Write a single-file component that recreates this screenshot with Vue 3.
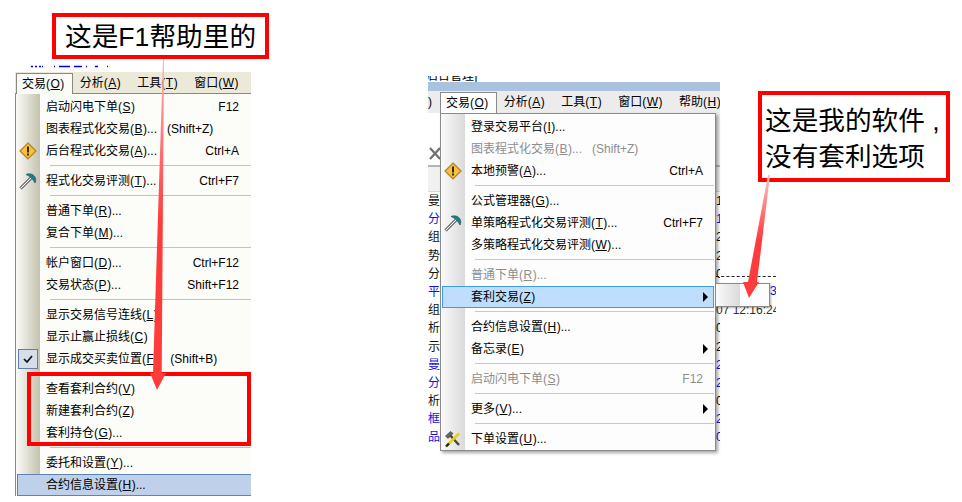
<script setup>
const sep = { sep: true }
const leftTabs = [
  { t: '交易', k: 'O', active: true },
  { t: '分析', k: 'A' },
  { t: '工具', k: 'T' },
  { t: '窗口', k: 'W' }
]
const rightTabs = [...leftTabs, { t: '帮助', k: 'H' }]

const leftItems = [
  { t: '启动闪电下单', k: 'S', sc: 'F12' },
  { t: '图表程式化交易', k: 'B', after: '...', note: '(Shift+Z)' },
  { t: '后台程式化交易', k: 'A', after: '...', sc: 'Ctrl+A', icon: 'warn' },
  sep,
  { t: '程式化交易评测', k: 'T', after: '...', sc: 'Ctrl+F7', icon: 'pick' },
  sep,
  { t: '普通下单', k: 'R', after: '...' },
  { t: '复合下单', k: 'M', after: '...' },
  sep,
  { t: '帐户窗口', k: 'D', after: '...', sc: 'Ctrl+F12' },
  { t: '交易状态', k: 'P', after: '...', sc: 'Shift+F12' },
  sep,
  { t: '显示交易信号连线', k: 'L' },
  { t: '显示止赢止损线', k: 'C' },
  { t: '显示成交买卖位置', k: 'F', note: '(Shift+B)', wide: true, icon: 'check' },
  sep,
  { t: '查看套利合约', k: 'V' },
  { t: '新建套利合约', k: 'Z' },
  { t: '套利持仓', k: 'G', after: '...' },
  sep,
  { t: '委托和设置', k: 'Y', after: '...' },
  { t: '合约信息设置', k: 'H', after: '...', hot: true }
]

const rightItems = [
  { t: '登录交易平台', k: 'I', after: '...' },
  { t: '图表程式化交易', k: 'B', after: '...', note: '(Shift+Z)', off: true },
  { t: '本地预警', k: 'A', after: '...', sc: 'Ctrl+A', icon: 'warn' },
  sep,
  { t: '公式管理器', k: 'G', after: '...' },
  { t: '单策略程式化交易评测', k: 'T', after: '...', sc: 'Ctrl+F7', icon: 'pick' },
  { t: '多策略程式化交易评测', k: 'W', after: '...' },
  sep,
  { t: '普通下单', k: 'R', after: '...', off: true },
  { t: '套利交易', k: 'Z', hot: true, sub: true },
  sep,
  { t: '合约信息设置', k: 'H', after: '...' },
  { t: '备忘录', k: 'E', sub: true },
  sep,
  { t: '启动闪电下单', k: 'S', sc: 'F12', off: true },
  sep,
  { t: '更多', k: 'V', after: '...', sub: true },
  sep,
  { t: '下单设置', k: 'U', after: '...', icon: 'tools' }
]

const panels = [
  { id: 'xp', tabs: leftTabs, items: leftItems },
  { id: 'win7', tabs: rightTabs, items: rightItems }
]

const backRows = [
  ['曼', '1', ''], ['分', '1', 'blue'], ['组', '2', ''], ['势', '2', ''], ['分', '0', ''],
  ['平', '', 'blue'], ['组', '', ''], ['析', '0', ''], ['示', '2', ''], ['曼', '2', 'blue'],
  ['分', '2', 'blue'], ['析', '0', ''], ['框', '2', 'blue'], ['品', '0', 'blue']
]
</script>

<template>
  <div class="canvas">
    <svg class="scraps" width="90" height="3" viewBox="0 0 90 3">
      <path d="M1 1.5h2M5 1.5h2M9 1.5h2M12 1.5h1M24 1.5h1M29 1.5h11M44 1.5h8M56 1.5h1M65 1.5h3M77 1.5h1" stroke="#0000ff" stroke-width="1.5" fill="none" />
    </svg>

    <div v-for="p in panels" :key="p.id" class="window" :class="p.id">
      <template v-if="p.id === 'win7'">
        <div class="title-scrap"><span>后台管理]</span></div>
        <div class="caption"></div>
        <div class="back">
          <div class="back-col">
            <div class="tool-strip">
              <svg class="close-x" width="12" height="13" viewBox="0 0 12 13">
                <path d="M1 1l10 11M11 1 1 12" stroke="#707070" stroke-width="2.2" fill="none" />
              </svg>
            </div>
            <div class="head-strip"></div>
            <div v-for="(r, i) in backRows" :key="i" class="back-row" :class="r[2]">{{ r[0] }}</div>
          </div>
          <div class="back-col right-col">
            <div class="tool-strip"></div>
            <div class="head-strip"></div>
            <div v-for="(r, i) in backRows" :key="i" class="back-row" :class="r[2]">{{ r[1] }}</div>
            <div class="dash"></div>
            <div class="stray blue-three">3</div>
            <div class="stray stamp">07 12:16:24</div>
          </div>
        </div>
      </template>

      <div class="menubar">
        <span v-if="p.id === 'win7'" class="cut-tab">)</span>
        <span v-for="tab in p.tabs" :key="tab.k" class="tab" :class="{ active: tab.active }">{{ tab.t }}(<u>{{ tab.k }}</u>)</span>
      </div>

      <div class="menu">
        <template v-for="(it, i) in p.items" :key="i">
          <div v-if="it.sep" class="sep"></div>
          <div v-else class="row" :class="{ hot: it.hot, off: it.off }">
            <span class="slot">
              <svg v-if="it.icon === 'warn'" width="18" height="18" viewBox="0 0 18 18">
                <polygon points="9,1 17,9 9,17 1,9" fill="#f7c13d" stroke="#b57f22" stroke-width="1.2" />
                <rect x="8" y="4.5" width="2" height="6" fill="#3a2a10" />
                <rect x="8" y="11.5" width="2" height="2" fill="#3a2a10" />
              </svg>
              <svg v-else-if="it.icon === 'pick'" width="18" height="18" viewBox="0 0 18 18">
                <path d="M1.5 16.5 12 6" stroke="#222" stroke-width="2.8" fill="none" />
                <path d="M1.5 16.5 12 6" stroke="#fff" stroke-width="1.2" fill="none" />
                <path d="M7 2.5C10 1 14 1.8 16 5C17 7 17 9.5 16 11C14.5 8 11.5 4.2 7 2.5Z" fill="#1c8089" stroke="#0e4d55" stroke-width=".6" />
              </svg>
              <span v-else-if="it.icon === 'check'" class="checkbox">
                <svg width="10" height="8" viewBox="0 0 10 8">
                  <path d="M1 4l3 3 5-6" stroke="#111" stroke-width="1.7" fill="none" />
                </svg>
              </span>
              <svg v-else-if="it.icon === 'tools'" width="18" height="18" viewBox="0 0 18 18">
                <path d="M5 4 15 15" stroke="#444" stroke-width="2.4" fill="none" />
                <path d="M1.5 6 6.5 1.5 9 3.5 4 8.5Z" fill="#666" stroke="#333" stroke-width=".6" />
                <path d="M3 15.5 15 3.5" stroke="#e8d20e" stroke-width="2.6" fill="none" />
                <path d="M2 16.5 5 13.5" stroke="#222" stroke-width="2.4" fill="none" />
              </svg>
            </span>
            <span class="label">{{ it.t }}(<u>{{ it.k }}</u>){{ it.after }}</span>
            <span v-if="it.note" class="note" :class="{ wide: it.wide }">{{ it.note }}</span>
            <span v-if="it.sc" class="shortcut">{{ it.sc }}</span>
            <span v-if="it.sub" class="caret"></span>
          </div>
        </template>
      </div>

      <div v-if="p.id === 'win7'" class="submenu"></div>
    </div>

    <div class="callout one">这是F1帮助里的</div>
    <div class="callout two">这是我的软件 ,<br />没有套利选项</div>
    <div class="frame"></div>

    <svg class="arrows" width="962" height="502" viewBox="0 0 962 502">
      <defs>
        <linearGradient id="fadeA" x1="0" y1="59" x2="0" y2="220" gradientUnits="userSpaceOnUse">
          <stop offset="0" stop-color="#ffb4b4" />
          <stop offset="1" stop-color="#ff3c3c" />
        </linearGradient>
        <linearGradient id="fadeB" x1="0" y1="175" x2="0" y2="240" gradientUnits="userSpaceOnUse">
          <stop offset="0" stop-color="#ffc0c0" />
          <stop offset="1" stop-color="#ff3c3c" />
        </linearGradient>
      </defs>
      <polygon points="163,59 164,59 161.7,373 166,373 157,390 150,373 153,373" fill="url(#fadeA)" />
      <polygon points="768,175 770,175 757,282 759,282 749,298 743,282 748,282" fill="url(#fadeB)" />
    </svg>
  </div>
</template>

<style>
html, body { margin: 0; background: #fff; }
</style>

<style scoped>
.canvas {
  position: relative;
  width: 962px;
  height: 502px;
  overflow: hidden;
  background: #fff;
  color: #000;
  font: 12px/22px "Liberation Sans", "Noto Sans CJK SC", sans-serif;
}
.scraps { position: absolute; left: 30px; top: 65px; }

.window { position: absolute; overflow: hidden; }
.window.xp { left: 15px; top: 72px; width: 236px; height: 425px; }
.window.win7 { left: 428px; top: 76px; width: 348px; height: 380px; }

.menubar { display: flex; height: 22px; line-height: 22px; white-space: nowrap; position: relative; }
.xp .menubar { background: #ece9d8; padding-left: 1px; }
.win7 .menubar { background: #ececec; width: 292px; height: 22px; padding-left: 12px; box-sizing: border-box; overflow: hidden; }
.cut-tab { position: absolute; left: 0; top: 0; }
.tab { padding: 0 9.5px 0 7px; flex: none; box-sizing: border-box; }
.tab u { margin: 0 .5px; }
.tab.active { border: 1px solid #8c8a7c; border-bottom: 0; padding: 0 7.5px 0 5px; line-height: 21px; margin-top: 1px; position: relative; z-index: 3; }
.xp .tab.active { background: #fbfbf7; }
.win7 .tab.active { background: #fff; border-color: #8a8a8a; }

.menu { position: relative; box-sizing: border-box; padding-top: 2px; }
.xp .menu {
  height: 403px;
  border-left: 1px solid #8c8a7c;
  border-top: 1px solid #8c8a7c;
  margin-top: -1px;
  background: linear-gradient(90deg, #fbfbf7, #c4c2ae) no-repeat 0 0 / 24px 100%, #fcfcf9;
}
.win7 .menu {
  position: absolute;
  left: 12px;
  top: 37px;
  width: 276px;
  height: 338px;
  border: 1px solid #8a8a8a;
  background: linear-gradient(90deg, #fafafa, #dadada) no-repeat 0 0 / 24px 100%, #fdfdfd;
  box-shadow: 2px 2px 3px rgba(0, 0, 0, .35);
  z-index: 2;
}

.row {
  display: flex;
  align-items: center;
  box-sizing: border-box;
  height: 22px;
  margin: 0 0 0 1px;
  padding-right: 12px;
  border: 1px solid transparent;
  border-right: 0;
  white-space: nowrap;
}
.win7 .row { margin-right: 1px; padding-right: 10px; border-right: 1px solid transparent; }
.row.hot { border-color: #5f84b4; background: #bfd1ea; }
.win7 .row.hot { border-color: #3d9be9; background: #bfdefe; }
.row.off { color: #8d8d8d; }
.slot { flex: none; box-sizing: border-box; width: 22px; height: 20px; padding-right: 2px; display: flex; align-items: center; justify-content: center; }
.label { padding-left: 6px; }
.label u { margin: 0 .5px; }
.note { margin-left: 10px; }
.note.wide { margin-left: 12px; }
.shortcut { margin-left: auto; }
.caret {
  margin-left: auto;
  margin-right: -5px;
  width: 0;
  height: 0;
  border-left: 5px solid #000;
  border-top: 5px solid transparent;
  border-bottom: 5px solid transparent;
}
.checkbox {
  box-sizing: border-box;
  flex: none;
  width: 20px;
  height: 20px;
  display: flex;
  align-items: center;
  justify-content: center;
  border: 1px solid #5f7fa8;
  background: #d6deec;
}

.sep { height: 1px; margin: 3px 0 4px 34px; background: #c5c2b8; }
.win7 .sep { margin-right: 1px; background: #c8c8c8; }

.title-scrap { height: 6px; width: 292px; overflow: hidden; position: relative; }
.title-scrap span { position: absolute; left: -2px; bottom: -1px; line-height: 14px; font-size: 12px; }
.caption { height: 9px; width: 292px; background: #a9c3df; }

.back { position: absolute; left: 0; top: 37px; width: 348px; height: 343px; }
.back-col { position: absolute; left: 0; top: 0; width: 12px; overflow: hidden; }
.right-col { left: 288px; width: 60px; height: 343px; }
.tool-strip { height: 54px; background: #fff; position: relative; border-bottom: 2px solid #b4b4b4; box-sizing: border-box; }
.right-col .tool-strip { width: 4px; background: #eee; }
.close-x { position: absolute; left: 1px; top: 34px; }
.head-strip { height: 25px; background: #f1f1f1; border-bottom: 1px solid #d8d8d8; box-sizing: border-box; }
.right-col .head-strip { width: 4px; }
.back-row { height: 18.2px; line-height: 18px; color: #111; }
.right-col .back-row { width: 4px; overflow: hidden; }
.back-row.blue { color: #1212e0; }
.dash { position: absolute; left: 0; top: 163px; width: 60px; border-top: 1px dashed #222; }
.stray { position: absolute; line-height: 14px; white-space: nowrap; }
.blue-three { left: 54px; top: 171px; color: #1212e0; }
.stamp { left: 0; top: 190px; color: #333; }
.submenu {
  position: absolute;
  left: 287px;
  top: 207px;
  width: 55px;
  height: 24px;
  box-sizing: border-box;
  border: 1px solid #8a8a8a;
  background: linear-gradient(90deg, #fafafa, #dadada) no-repeat 0 0 / 24px 100%, #fdfdfd;
  box-shadow: 1px 1px 2px rgba(0, 0, 0, .3);
  z-index: 3;
}

.callout {
  position: absolute;
  box-sizing: border-box;
  border: 4px solid #f00;
  background: #fff;
  font-size: 26.67px;
  z-index: 4;
}
.callout.one { left: 52px; top: 13px; width: 217px; height: 46px; padding-left: 9px; line-height: 40px; white-space: nowrap; }
.callout.two { left: 758px; top: 91px; width: 192px; height: 91px; padding: 8px 0 0 3px; line-height: 36px; white-space: nowrap; }
.frame { position: absolute; left: 27px; top: 372px; width: 224px; height: 74px; box-sizing: border-box; border: 4px solid #f00; z-index: 4; }
.arrows { position: absolute; left: 0; top: 0; z-index: 5; pointer-events: none; }
</style>
